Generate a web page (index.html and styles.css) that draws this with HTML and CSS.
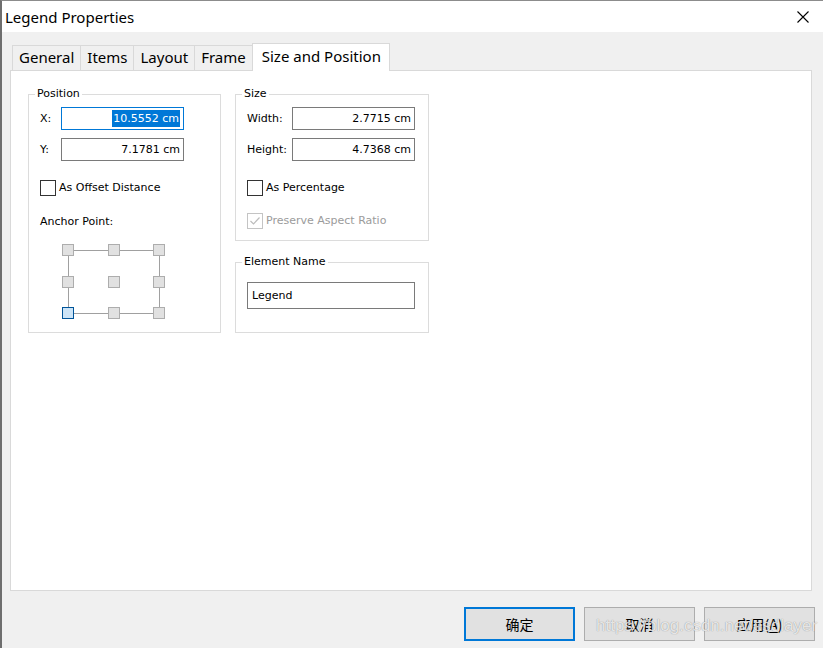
FILE: index.html
```html
<!DOCTYPE html>
<html>
<head>
<meta charset="utf-8">
<title>Legend Properties</title>
<link rel="stylesheet" href="styles.css">
</head>
<body>
<div class="window">
  <div class="titlebar">
    <span class="title">Legend Properties</span>
    <svg class="close" width="12" height="12" viewBox="0 0 12 12"><path d="M0.5 0.5 L11.5 11.5 M11.5 0.5 L0.5 11.5" stroke="#000" stroke-width="1.1" fill="none"/></svg>
  </div>
  <div class="content">
    <div class="tabs">
      <div class="tab">General</div>
      <div class="tab">Items</div>
      <div class="tab">Layout</div>
      <div class="tab">Frame</div>
      <div class="tab active">Size and Position</div>
    </div>
    <div class="panel">
      <div class="col col-left">
        <fieldset class="group group-pos">
          <legend>Position</legend>
          <div class="row">
            <span class="lbl lbl-xy">X:</span>
            <div class="textbox focused"><span class="sel">10.5552 cm</span></div>
          </div>
          <div class="row row-next">
            <span class="lbl lbl-xy">Y:</span>
            <div class="textbox">7.1781 cm</div>
          </div>
          <label class="check check-first"><span class="box"></span>As Offset Distance</label>
          <div class="anchor-label">Anchor Point:</div>
          <svg class="anchor" width="104" height="76" viewBox="0 0 104 76">
            <g stroke="#a0a0a0" stroke-width="1" fill="none">
              <path d="M12 6.5 H46 M58 6.5 H91 M12 69.5 H46 M58 69.5 H91 M6.5 12 V32 M6.5 44 V63 M97.5 12 V32 M97.5 44 V63"/>
            </g>
            <g fill="#e1e1e1" stroke="#adadad" stroke-width="1">
              <rect x="0.5" y="0.5" width="11" height="11"/>
              <rect x="46.5" y="0.5" width="11" height="11"/>
              <rect x="91.5" y="0.5" width="11" height="11"/>
              <rect x="0.5" y="32.5" width="11" height="11"/>
              <rect x="46.5" y="32.5" width="11" height="11"/>
              <rect x="91.5" y="32.5" width="11" height="11"/>
              <rect x="46.5" y="63.5" width="11" height="11"/>
              <rect x="91.5" y="63.5" width="11" height="11"/>
            </g>
            <rect x="0.5" y="63.5" width="11" height="11" fill="#cce4f7" stroke="#005499" stroke-width="1"/>
          </svg>
        </fieldset>
      </div>
      <div class="col col-right">
        <fieldset class="group group-size">
          <legend>Size</legend>
          <div class="row">
            <span class="lbl lbl-wh">Width:</span>
            <div class="textbox">2.7715 cm</div>
          </div>
          <div class="row row-next">
            <span class="lbl lbl-wh">Height:</span>
            <div class="textbox">4.7368 cm</div>
          </div>
          <label class="check check-first"><span class="box"></span>As Percentage</label>
          <label class="check check-disabled"><span class="box box-disabled"><svg width="14" height="14" viewBox="0 0 14 14"><path d="M2.5 7 L5.5 10 L11.5 3.5" stroke="#bcbcbc" stroke-width="1.2" fill="none"/></svg></span>Preserve Aspect Ratio</label>
        </fieldset>
        <fieldset class="group group-name">
          <legend>Element Name</legend>
          <div class="textbox namebox">Legend</div>
        </fieldset>
      </div>
    </div>
    <div class="buttons">
      <div class="btn btn-default">确定</div>
      <div class="btn">取消</div>
      <div class="btn">应用(<u>A</u>)</div>
    </div>
  </div>
  <div class="watermark">https://blog.csdn.net/esdlayer</div>
</div>
</body>
</html>
```
FILE: styles.css
```css
* { box-sizing: border-box; }
html, body { margin: 0; padding: 0; background: #f0f0f0; }
.window {
  position: relative;
  width: 823px;
  height: 648px;
  background: #f0f0f0;
  border-left: 2px solid #6e6e6e;
  border-top: 1px solid #8c8c8c;
  overflow: hidden;
  font-family: "DejaVu Sans", sans-serif;
  font-size: 11px;
  color: #000;
}
.titlebar {
  height: 31px;
  background: #fff;
  display: flex;
  align-items: center;
  justify-content: space-between;
  padding: 0 14px 0 3px;
}
.title {
  font-family: "Noto Sans", sans-serif;
  font-size: 15px;
  line-height: 20px;
  margin-top: 1px;
}
.close { display: block; margin-top: 0; }
.content {
  padding: 11px 11px 0 8px;
}
.tabs {
  display: flex;
  align-items: flex-end;
  height: 28px;
  margin-bottom: -1px;
  padding-left: 2px;
  font-family: "Noto Sans", sans-serif;
  font-size: 15px;
}
.tab {
  height: 25px;
  line-height: 23px;
  padding: 0 6px;
  margin-bottom: 1px;
  border: 1px solid #d9d9d9;
  border-bottom: none;
  background: #f0f0f0;
  margin-left: -1px;
}
.tab:first-child { margin-left: 0; }
.tab.active {
  position: relative;
  z-index: 1;
  height: 28px;
  line-height: 24px;
  margin-bottom: 0;
  padding: 0 8px 0 9px;
  background: #fff;
}
.panel {
  height: 521px;
  background: #fff;
  border: 1px solid #d9d9d9;
  display: flex;
  align-items: flex-start;
  gap: 14px;
  padding: 16px 0 0 17px;
}
.col { display: flex; flex-direction: column; }
.col-left { width: 193px; }
.col-right { width: 194px; }
.group {
  margin: 0;
  border: 1px solid #dcdcdc;
  padding: 6px 11px 0 11px;
  min-width: 0;
}
.group legend {
  padding: 0 2px;
  margin-left: -5px;
  line-height: 14px;
  font-size: 11px;
}
.group-pos { padding-bottom: 12px; }
.group-size { padding-bottom: 11px; }
.group-name {
  margin-top: 14px;
  padding-top: 13px;
  padding-bottom: 23px;
}
.row {
  display: flex;
  align-items: center;
  height: 23px;
}
.row-next { margin-top: 8px; }
.lbl { flex: none; }
.lbl-xy { width: 21px; }
.lbl-wh { width: 45px; }
.textbox {
  width: 123px;
  height: 23px;
  border: 1px solid #7a7a7a;
  background: #fff;
  text-align: right;
  padding: 2px 3px 0 3px;
  line-height: 17px;
  white-space: nowrap;
}
.textbox.focused { border-color: #0078d7; }
.sel {
  display: inline-block;
  background: #0078d7;
  color: #fff;
  padding: 0 1px;
}
.namebox {
  width: 168px;
  height: 27px;
  text-align: left;
  padding: 4px 4px 0 4px;
}
.check {
  display: flex;
  align-items: center;
  height: 16px;
  line-height: 16px;
}
.check-first { margin-top: 19px; }
.check-disabled { margin-top: 17px; color: #9b9b9b; }
.box {
  width: 16px;
  height: 16px;
  border: 1px solid #333;
  background: #fff;
  margin-right: 3px;
  flex: none;
  display: flex;
  align-items: center;
  justify-content: center;
}
.box-disabled { border-color: #c4c4c4; }
.box svg { display: block; }
.anchor-label {
  margin-top: 19px;
  line-height: 14px;
}
.anchor {
  display: block;
  margin: 15px 0 0 22px;
}
.buttons {
  display: flex;
  justify-content: flex-end;
  gap: 9px;
  margin-top: 16px;
  margin-right: -3px;
}
.btn {
  width: 111px;
  height: 34px;
  border: 1px solid #adadad;
  background: #e1e1e1;
  display: flex;
  align-items: center;
  justify-content: center;
  font-family: "Noto Sans CJK SC", sans-serif;
  font-size: 14px;
}
.btn-default { border: 2px solid #0078d7; }
.btn u { text-decoration: underline; text-underline-offset: 2px; }
.watermark {
  position: absolute;
  left: 594px;
  top: 615px;
  font-family: "Liberation Sans", sans-serif;
  font-size: 17px;
  color: rgba(255,255,255,0.8);
  text-shadow: 0 0 1px rgba(0,0,0,0.45);
  white-space: nowrap;
  pointer-events: none;
}
```
